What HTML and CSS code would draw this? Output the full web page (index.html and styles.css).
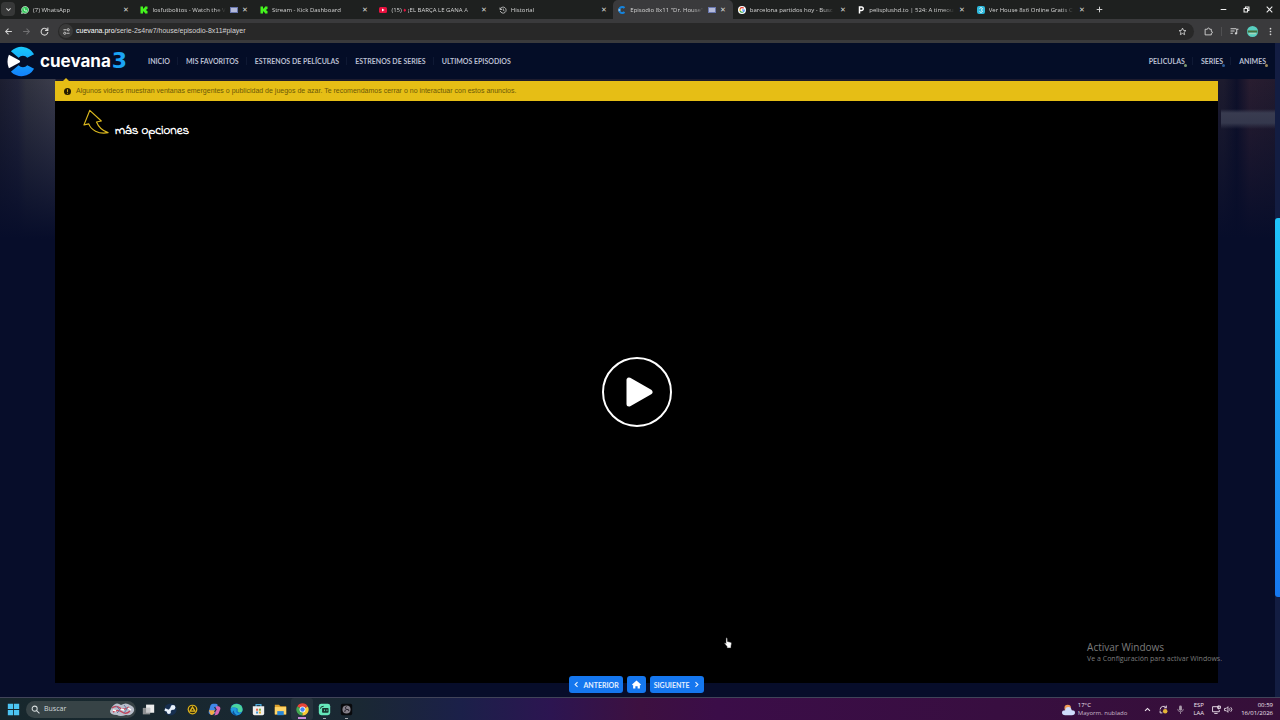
FILE: index.html
```
<!DOCTYPE html>
<html lang="es">
<head>
    <meta charset="UTF-8">
    <meta name="viewport" content="width=device-width, initial-scale=1.0">
    <title>Episodio 8x11 "Dr. House"</title>
    <link rel="stylesheet" href="styles.css">
</head>
<body>
    <div class="tab-strip">
        <button class="tab-search" aria-label="Buscar pestañas"><svg class="icon-sm" viewBox="0 0 10 10"><path d="M2 3.5l3 3 3-3" fill="none" stroke="currentColor" stroke-width="1.6"/></svg></button>
        <div class="tabs">
            <div class="tab">
                <svg class="favicon" viewBox="0 0 16 16"><path d="M1 15l1-4a7 7 0 1 1 3 3z" fill="#35c95b" stroke="#e8f8ec" stroke-width="1.3"/><path d="M5.500 4.500c-1 3 2 7 6 6.500l.5-1.500-2-1-1 1c-1-.5-2-1.500-2.200-2.500l.7-.7-.8-1.800z" fill="#fff"/></svg>
                <span class="tab-title">(7) WhatsApp</span>
                <button class="tab-close" aria-label="Cerrar"></button>
            </div>
            <div class="tab">
                <svg class="favicon" viewBox="0 0 16 16"><path d="M1 1h5v4h2V3h2V1h5v5h-2v2h-2 2v2h2v5h-5v-2H8v-2H6v4H1z" fill="#45f51e"/></svg>
                <span class="tab-title">losfutbolitos - Watch the V</span>
                <span class="tab-media"></span>
                <button class="tab-close" aria-label="Cerrar"></button>
            </div>
            <div class="tab">
                <svg class="favicon" viewBox="0 0 16 16"><path d="M1 1h5v4h2V3h2V1h5v5h-2v2h-2 2v2h2v5h-5v-2H8v-2H6v4H1z" fill="#45f51e"/></svg>
                <span class="tab-title">Stream - Kick Dashboard</span>
                <button class="tab-close" aria-label="Cerrar"></button>
            </div>
            <div class="tab">
                <svg class="favicon" viewBox="0 0 16 16"><rect y="2" width="16" height="12" rx="3" fill="#e8113f"/><path d="M6 5l5 3-5 3z" fill="#fff"/></svg>
                <span class="tab-title">(15) <span class="live">♦</span> ¡EL BARÇA LE GANA A</span>
                <button class="tab-close" aria-label="Cerrar"></button>
            </div>
            <div class="tab">
                <svg class="favicon" viewBox="0 0 16 16" fill="none" stroke="#c8c8c8" stroke-width="1.7"><path d="M2 3v4h4M2.500 6.500A6 6 0 1 1 2.500 10M8.500 5v3.500l2.500 1.500"/></svg>
                <span class="tab-title">Historial</span>
                <button class="tab-close" aria-label="Cerrar"></button>
            </div>
            <div class="tab active">
                <svg class="favicon" viewBox="0 0 16 16"><path d="M13 4a6 6 0 1 0 0 8" fill="none" stroke="#1583dc" stroke-width="4"/><path d="M1 5l5 3-5 3z" fill="#9bc6e8"/></svg>
                <span class="tab-title">Episodio 8x11 "Dr. House":</span>
                <span class="tab-media"></span>
                <button class="tab-close" aria-label="Cerrar"></button>
            </div>
            <div class="tab">
                <svg class="favicon" viewBox="0 0 16 16" fill="none" stroke-width="2.400"><circle cx="8" cy="8" r="8" fill="#fff"/><path d="M4 6a4.500 4.500 0 0 1 7.500-1.500" stroke="#e34133"/><path d="M4 6v4" stroke="#f5b400"/><path d="M4 10a4.500 4.500 0 0 0 6.500 1.800" stroke="#34a853"/><path d="M10.500 11.800A4.500 4.500 0 0 0 12.500 8H8" stroke="#4285f4"/></svg>
                <span class="tab-title">barcelona partidos hoy - Busc</span>
                <button class="tab-close" aria-label="Cerrar"></button>
            </div>
            <div class="tab">
                <svg class="favicon" viewBox="0 0 16 16"><path d="M5 15V2h4a3.500 3.500 0 0 1 0 7H5" fill="none" stroke="#fff" stroke-width="3"/></svg>
                <span class="tab-title">pelisplushd.to | 524: A timeou</span>
                <button class="tab-close" aria-label="Cerrar"></button>
            </div>
            <div class="tab">
                <svg class="favicon" viewBox="0 0 16 16"><rect width="16" height="16" rx="4" fill="#2fb9dc"/><path d="M5 5l3-2 3 2-2 3 2 3-3 2-3-2" fill="none" stroke="#e9fbff" stroke-width="2"/></svg>
                <span class="tab-title">Ver House 8x6 Online Gratis C</span>
                <button class="tab-close" aria-label="Cerrar"></button>
            </div>
        </div>
        <button class="new-tab" aria-label="Nueva pestaña"><svg class="icon-sm" viewBox="0 0 10 10"><path d="M5 1v8M1 5h8" stroke="currentColor" stroke-width="1.400"/></svg></button>
        <div class="window-controls">
            <button aria-label="Minimizar"><svg class="icon-sm" viewBox="0 0 10 10"><path d="M1 5h8" stroke="currentColor" stroke-width="1.500"/></svg></button>
            <button aria-label="Restaurar"><svg class="icon-sm" viewBox="0 0 10 10" fill="none" stroke="currentColor" stroke-width="1.500"><path d="M1.500 3.500h5v5h-5zM3.500 3V1.500h5v5H7"/></svg></button>
            <button aria-label="Cerrar ventana"><svg class="icon-sm" viewBox="0 0 10 10"><path d="M1 1l8 8M9 1L1 9" stroke="currentColor" stroke-width="1.500"/></svg></button>
        </div>
    </div>

    <div class="toolbar">
        <button aria-label="Atrás"><svg class="icon" viewBox="0 0 16 16"><path d="M14 8H3M8 3L3 8l5 5" fill="none" stroke="currentColor" stroke-width="1.800"/></svg></button>
        <button aria-label="Adelante" disabled><svg class="icon" viewBox="0 0 16 16"><path d="M2 8h11M8 3l5 5-5 5" fill="none" stroke="currentColor" stroke-width="1.800"/></svg></button>
        <button aria-label="Recargar"><svg class="icon" viewBox="0 0 16 16"><path d="M13 5a6 6 0 1 0 1 4M14 1v5H9" fill="none" stroke="currentColor" stroke-width="1.900"/></svg></button>
        <div class="address-bar">
            <button class="site-info" aria-label="Información del sitio"><svg class="icon-sm" viewBox="0 0 16 16" fill="none" stroke="currentColor" stroke-width="2"><path d="M1 4h7M8 12h7"/><circle cx="12" cy="4" r="2.500"/><circle cx="4" cy="12" r="2.500"/></svg></button>
            <a class="url" href="#player"><span>cuevana.pro</span>/serie-2s4rw7/house/episodio-8x11#player</a>
            <button aria-label="Favorito"><svg class="icon" viewBox="0 0 16 16"><path d="M8 2l1.800 4 4.300.4-3.300 2.900 1 4.300L8 11.400l-3.800 2.200 1-4.300L1.900 6.400 6.200 6z" fill="none" stroke="currentColor" stroke-width="1.500"/></svg></button>
        </div>
        <div class="toolbar-actions">
            <button aria-label="Extensiones"><svg class="icon" viewBox="0 0 16 16"><path d="M2 4h4c0-3 4-3 4 0h3v4c3 0 3 3 0 3v3H2z" fill="none" stroke="currentColor" stroke-width="1.600"/></svg></button>
            <span class="bar-line"></span>
            <button aria-label="Controles multimedia"><svg class="icon" viewBox="0 0 16 16"><path d="M1 3h10M1 7h7M1 11h4M12 12V4h3" fill="none" stroke="currentColor" stroke-width="1.800"/><circle cx="10.500" cy="11.500" r="2" fill="currentColor"/></svg></button>
            <button aria-label="Perfil"><svg class="avatar" viewBox="0 0 16 16"><circle cx="8" cy="8" r="8" fill="#58cfc0"/><path d="M1 8h14" stroke="#496d3c" stroke-width="3"/><path d="M3 11h10" stroke="#a5d6bd" stroke-width="2"/></svg></button>
            <button class="menu-btn" aria-label="Menú"><svg class="icon" viewBox="0 0 16 16" fill="currentColor"><circle cx="8" cy="3" r="1.500"/><circle cx="8" cy="8" r="1.500"/><circle cx="8" cy="13" r="1.500"/></svg></button>
        </div>
    </div>

    <div class="viewport">
        <div class="page">
            <header class="site-header">
                <a class="logo" href="#">
                    <svg class="logo-mark" viewBox="0 0 30 32"><defs><linearGradient id="c" x2="0" y2="1"><stop stop-color="#18c8fb"/><stop offset="1" stop-color="#1380fb"/></linearGradient></defs><path d="M28 8.500A15 15 0 0 0 4 5.500L12 12a6 6 0 0 1 9 0zM28 23.500A15 15 0 0 1 4 26.500L12 20a6 6 0 0 0 9 0z" fill="url(#c)"/><path d="M2 9q-3 7 0 14l11-6q1-1 0-2z" fill="#fff"/></svg>
                    <span class="logo-text">cuevana</span>
                    <span class="logo-num">3</span>
                </a>
                <nav class="main-nav">
                    <a href="#">INICIO</a>
                    <a href="#">MIS FAVORITOS</a>
                    <a href="#">ESTRENOS DE PELÍCULAS</a>
                    <a href="#">ESTRENOS DE SERIES</a>
                    <a href="#">ULTIMOS EPISODIOS</a>
                </nav>
                <nav class="genre-nav">
                    <a class="green" href="#">PELICULAS</a>
                    <a class="blue" href="#">SERIES</a>
                    <a class="orange" href="#">ANIMES</a>
                </nav>
            </header>

            <main class="content">
                <div class="notice">
                    <svg class="notice-icon" viewBox="0 0 16 16"><circle cx="8" cy="8" r="8" fill="#241c00"/><path d="M8 3v6M8 11v2" stroke="#e7be15" stroke-width="2"/></svg>
                    Algunos videos muestran ventanas emergentes o publicidad de juegos de azar. Te recomendamos cerrar o no interactuar con estos anuncios.
                </div>
                <div class="player" id="player">
                    <div class="more-options">
                        <svg class="hand-arrow" viewBox="0 0 28 26"><path d="M7 1L1 16l5-1c2 6 10 11 20 9-6-2-10-6-12-11l5-1z" fill="none" stroke="#dcb91e" stroke-width="1.200" stroke-linejoin="round"/></svg>
                        <span>más opciones</span>
                    </div>
                    <button class="play-btn" aria-label="Reproducir"><svg viewBox="0 0 70 70"><circle cx="35" cy="35" r="34" fill="none" stroke="#fff" stroke-width="2"/><path d="M27 23v24l21-12z" fill="#fff" stroke="#fff" stroke-width="5" stroke-linejoin="round"/></svg></button>
                </div>
                <div class="episode-nav">
                    <a class="btn" href="#"><svg class="icon-sm" viewBox="0 0 10 10"><path d="M6.500 1.500L3 5l3.500 3.500" fill="none" stroke="currentColor" stroke-width="1.600"/></svg> ANTERIOR</a>
                    <a class="btn btn-home" href="#" aria-label="Inicio"><svg class="icon" viewBox="0 0 16 16"><path d="M8 1L0 8l1 1.500 1-.8V15h4v-4h4v4h4V8.700l1 .8L16 8z" fill="#fff"/></svg></a>
                    <a class="btn" href="#">SIGUIENTE <svg class="icon-sm" viewBox="0 0 10 10"><path d="M3.500 1.500L7 5 3.500 8.500" fill="none" stroke="currentColor" stroke-width="1.600"/></svg></a>
                </div>
            </main>
        </div>
        <div class="scroll-track"><div class="scroll-thumb"></div></div>

        <div class="watermark">
            <p class="watermark-title">Activar Windows</p>
            <p>Ve a Configuración para activar Windows.</p>
        </div>
        <svg class="cursor" viewBox="0 0 16 22"><path d="M4 1q2-1 2.500 1L7 8l6 1.500q2.500.5 2 3L14 17v4H6v-3L1 12q0-2 2-1l1 1z" fill="#fff" stroke="#222"/></svg>
    </div>

    <footer class="taskbar">
        <button class="start" aria-label="Inicio"><svg viewBox="0 0 16 16" fill="#4cc5f2"><path d="M1 1h6.500v6.500H1zM8.500 1H15v6.500H8.500zM1 8.500h6.500V15H1zM8.500 8.500H15V15H8.500z"/></svg></button>
        <label class="search">
            <svg class="icon" viewBox="0 0 16 16" fill="none" stroke="#d5dbdc" stroke-width="1.800"><circle cx="6.500" cy="6.500" r="4.500"/><path d="M10 10l5 5"/></svg>
            <input type="search" placeholder="Buscar" aria-label="Buscar">
            <svg class="highlight" viewBox="0 0 26 13"><path d="M3 4q4-6 9-2 5-3 9 0 5 2 4 6-2 5-8 4-6 2-9 0-7 0-7-4z" fill="#b9bfcb"/><path d="M3 5q4-3 8 0t9-1M4 9q5-3 9 0t8-1" fill="none" stroke="#c0445a" stroke-width="1.500"/><path d="M7 3l4 4-3 3M15 2l3 4-3 4" fill="none" stroke="#6478a4" stroke-width="1"/><path d="M12 6l3 1M19 5l3 2M4 7l3 1" stroke="#fff" stroke-width="1.500"/></svg>
        </label>
        <div class="apps">
            <button aria-label="Vista de tareas"><svg viewBox="0 0 16 16"><path d="M5 2h10v10H5z" fill="#ececec"/><path d="M1 6h9v8H1z" fill="#8d9092"/><path d="M5 6h5v6H5z" fill="#c5c7c8"/></svg></button>
            <button aria-label="Steam"><svg viewBox="0 0 16 16"><circle cx="8" cy="8" r="7.500" fill="#172f50"/><path d="M1 8l5 2 4-4" fill="none" stroke="#e9f2fc" stroke-width="3"/><circle cx="11" cy="5.500" r="3" fill="#e9f2fc"/><circle cx="6" cy="11" r="2.500" fill="#e9f2fc"/></svg></button>
            <button aria-label="Limpiador"><svg viewBox="0 0 16 16"><circle cx="8" cy="8" r="6" fill="#e0b51c"/><circle cx="8" cy="8" r="4.500" fill="#302a10"/><path d="M8 5l3 5H5z" fill="none" stroke="#e0b51c" stroke-width="1.600"/></svg></button>
            <button aria-label="Copilot"><svg viewBox="0 0 16 16"><path d="M6 1h4q2 0 2 3L9 12q-1 2-3 2H3q-3-1-2-4l2-7q1-2 3-2z" fill="#3f87e8"/><path d="M10 4h3q3 1 2 4l-2 5q-1 2-4 2H7q2 0 2-4z" fill="#d765b2"/><path d="M1 9l2 5q3 2 5-2l1-3z" fill="#efad46"/><path d="M8 5l2 3-2 3" fill="none" stroke="#263248" stroke-width="1.500"/></svg></button>
            <button aria-label="Edge"><svg viewBox="0 0 16 16"><circle cx="8" cy="8" r="7.500" fill="#1976ce"/><path d="M1 6a7.500 7.500 0 0 1 14.500 3c-1 4-7 3-6 0S7 5 1 6z" fill="#4bd39d"/><path d="M1 7c4-3 8-1 7 2s2 5 6 3c-5 6-13 2-13-5z" fill="#219cdf"/><path d="M5 9q-1 4 4 6-6 1-6-4z" fill="#10529b"/></svg></button>
            <button aria-label="Microsoft Store"><svg viewBox="0 0 16 16"><path d="M5 5V2h6v3" fill="none" stroke="#4aa9dc" stroke-width="1.500"/><path d="M1 4h14v9q0 2-2 2H3q-2 0-2-2z" fill="#eeeeec"/><path d="M5 7h2.500v2.500H5z" fill="#e76345"/><path d="M8.500 7H11v2.500H8.500z" fill="#7bae37"/><path d="M5 10.500h2.500V13H5z" fill="#4098d3"/><path d="M8.500 10.500H11V13H8.500z" fill="#e7af28"/></svg></button>
            <button aria-label="Explorador de archivos"><svg viewBox="0 0 16 16"><path d="M1 2h5l2 2h7v10H1z" fill="#dda12c"/><path d="M1 5h14v9H1z" fill="#ffd568"/><path d="M4 10h8v5H4z" fill="#2886d6"/></svg></button>
            <button class="running current" aria-label="Chrome"><svg viewBox="0 0 16 16"><path d="M8 8L1.500 4.200a7.500 7.500 0 0 1 13 0z" fill="#e74336"/><path d="M8 8v7.500A7.500 7.500 0 0 1 1.500 4.200z" fill="#43a852"/><path d="M14.500 4.200A7.500 7.500 0 0 1 8 15.500V8z" fill="#f7cb35"/><circle cx="8" cy="8" r="3.600" fill="#fff"/><circle cx="8" cy="8" r="2.700" fill="#4285f4"/></svg></button>
            <button class="running" aria-label="Streamlabs"><svg viewBox="0 0 16 16"><rect x="1" y="1" width="14" height="14" rx="3" fill="#65e7ba"/><rect x="5" y="6" width="8" height="6" rx="1" fill="#17332e"/><path d="M3 7q0-3 4-3" fill="none" stroke="#17332e" stroke-width="1.200"/><path d="M8 8v2M11 8v2" stroke="#65e7ba"/></svg></button>
            <button class="running" aria-label="OBS"><svg viewBox="0 0 16 16"><rect x="1" y="1" width="14" height="14" rx="2" fill="#08090c"/><circle cx="8" cy="8" r="5" fill="#85808a"/><path d="M8 4q-3 2 0 4 3-1 3 2M8 8q-3 1-2 3" fill="none" stroke="#24202a" stroke-width="1.200"/></svg></button>
        </div>
        <button class="weather">
            <svg viewBox="0 0 16 16"><circle cx="7" cy="6" r="4" fill="#ef9a55"/><path d="M4 15q-4 0-4-3t4-3q0-4 4-4 3 0 4 4 4 0 4 3t-4 3z" fill="#cfdcfb"/></svg>
            <span>17°C<br><em>Mayorm. nublado</em></span>
        </button>
        <div class="tray">
            <button aria-label="Iconos ocultos"><svg class="icon-sm" viewBox="0 0 10 10"><path d="M1.500 7L5 3.500 8.500 7" fill="none" stroke="currentColor" stroke-width="1.600"/></svg></button>
            <button aria-label="Actualización"><svg class="icon" viewBox="0 0 16 16"><path d="M2 8a6 6 0 0 1 11-3M13 1v4H9M2 10v4h4" fill="none" stroke="currentColor" stroke-width="1.600"/><circle cx="11" cy="11" r="4" fill="#e6b537"/></svg></button>
            <button aria-label="Micrófono"><svg class="icon" viewBox="0 0 16 16"><rect x="5.500" y="1" width="5" height="9" rx="2.500" fill="#ab9cac"/><path d="M3 7q0 5 5 5t5-5M8 12v4" fill="none" stroke="#ab9cac" stroke-width="1.300"/></svg></button>
            <button class="language">ESP<br>LAA</button>
            <button class="net" aria-label="Red y volumen">
                <svg class="icon" viewBox="0 0 16 16" fill="none" stroke="currentColor" stroke-width="1.600"><path d="M10 3H1v9h12V9M4 15h6M12 1v7M10 2h5v4h-5z"/></svg>
                <svg class="icon" viewBox="0 0 16 16" fill="none" stroke="currentColor" stroke-width="1.500"><path d="M1 6h3l3-3v10l-3-3H1zM9.500 6q2 2 0 4M12 4q4 4 0 8"/></svg>
            </button>
            <button class="clock">00:59<br>16/01/2026</button>
        </div>
    </footer>
</body>
</html>
```
FILE: styles.css
```
* {
    box-sizing: border-box;
}
body {
    font-family: "Open Sans", "Segoe UI", sans-serif;
    font-size: 7px;
    line-height: 8px;
    color: #d4d4d4;
    background-color: #050b24;
    margin: 0;
    display: flex;
    flex-direction: column;
    height: 100vh;
    overflow: hidden;
}
button {
    display: flex;
    align-items: center;
    justify-content: center;
    flex: none;
    background: none;
    border: none;
    padding: 0;
    font: inherit;
    color: inherit;
}
a {
    color: inherit;
    text-decoration: none;
}
p {
    margin: 0;
}
svg {
    display: block;
    flex: none;
}
.icon {
    width: 9px;
    height: 9px;
}
.icon-sm {
    width: 7px;
    height: 7px;
}

/* Browser */
.tab-strip {
    display: flex;
    align-items: stretch;
    flex: none;
    height: 19px;
    background-color: #1e201f;
}
.tab-search {
    width: 14px;
    height: 14px;
    margin: 2px 1px;
    border-radius: 4px;
    background-color: #373838;
}
.tabs {
    display: grid;
    grid-template-columns: repeat(9, 1fr);
    width: 84%;
}
.tab {
    display: flex;
    align-items: center;
    gap: 4px;
    min-width: 0;
    padding: 0 6px 0 5px;
    border-radius: 5px 5px 0 0;
}
.tab.active {
    background-color: #3a3a3c;
}
.favicon {
    width: 8px;
    height: 8px;
}
.tab-title {
    flex: 1;
    overflow: hidden;
    white-space: nowrap;
    font-size: 6px;
    mask-image: linear-gradient(90deg, #000 85%, transparent);
}
.live {
    color: #e8113f;
}
.tab-media {
    width: 8px;
    height: 6px;
    border: 1px solid #6876ae;
    background-color: #b4bad9;
}
.tab-close {
    width: 7px;
    height: 8px;
}
.tab-close::before {
    content: "✕";
    font-size: 7px;
}
.new-tab {
    width: 16px;
}
.window-controls {
    display: flex;
    gap: 16px;
    margin-left: auto;
    padding-right: 7px;
    color: #f0f0f0;
}
.toolbar {
    display: flex;
    align-items: center;
    flex: none;
    gap: 9px;
    height: 24px;
    padding: 0 5px 0 4px;
    background-color: #3a3a3c;
}
.toolbar button:disabled {
    color: #717173;
}
.address-bar {
    display: flex;
    align-items: center;
    flex: 1;
    gap: 3px;
    height: 17px;
    padding: 0 7px 0 1px;
    border-radius: 9px;
    background-color: #282828;
    font-family: "Liberation Sans", Arial, sans-serif;
}
.site-info {
    width: 14px;
    height: 14px;
    border-radius: 50%;
    background-color: #3a3a3a;
}
.url {
    flex: 1;
}
.url span {
    color: #fff;
}
.toolbar-actions {
    display: flex;
    align-items: center;
    gap: 8px;
    margin-left: 1px;
}
.bar-line {
    width: 1px;
    height: 9px;
    background-color: #505052;
}
.avatar {
    width: 11px;
    height: 11px;
}

/* Site */
.viewport {
    display: flex;
    flex: 1;
    min-height: 0;
    position: relative;
}
.page {
    display: flex;
    flex-direction: column;
    flex: 1;
    background: #050c27;
}
.site-header {
    display: flex;
    align-items: center;
    flex: none;
    height: 36px;
    padding: 0 9px 0 7px;
    background-color: #040d27;
    color: #b9bfd0;
    font-family: Lato, sans-serif;
    font-weight: 700;
}
.logo {
    display: flex;
    align-items: center;
    margin-right: 21px;
    color: #fff;
    font-family: Inter, sans-serif;
    font-size: 17px;
    line-height: 20px;
}
.logo-mark {
    width: 29px;
    height: 31px;
    margin-right: 4px;
}
.logo-num {
    margin-left: 1px;
    color: #1ba4f5;
    font-family: "DejaVu Sans", sans-serif;
    font-size: 22px;
}
.main-nav,
.genre-nav {
    display: flex;
}
.genre-nav {
    margin-left: auto;
}
.site-header nav a {
    position: relative;
}
.site-header nav a + a {
    margin-left: 7px;
    padding-left: 8px;
    border-left: 1px solid #0f1934;
}
.genre-nav a::after {
    content: "";
    position: absolute;
    right: -2px;
    bottom: -2px;
    width: 3px;
    height: 3px;
    border-radius: 50%;
}
.green::after {
    background-color: #7c9a72;
}
.blue::after {
    background-color: #2c5c98;
}
.orange::after {
    background-color: #a08a5a;
}
.content {
    display: flex;
    flex-direction: column;
    flex: 1;
    padding: 2px 57px 4px 55px;
    background:
        linear-gradient(180deg, transparent, #070d2a 160px),
        linear-gradient(180deg, transparent 30px, #46485a 34px, #46485a 44px, transparent 50px) right top / 54px 160px no-repeat,
        linear-gradient(90deg, #1c1e30, #23253a 18px, #30323f 26px, #3c3d4c 55px, #1d1c2e 56px, #1d1b2e 96%, #0e1029 97%, #291d30 98%, #231b2e);
}
.notice {
    display: flex;
    align-items: center;
    flex: none;
    gap: 5px;
    height: 20px;
    padding: 0 9px;
    position: relative;
    background-color: #e6be15;
    color: #6b5808;
    font-family: "Liberation Sans", Arial, sans-serif;
}
.notice::before {
    content: "";
    position: absolute;
    left: 8px;
    top: -3px;
    border: 3px solid transparent;
    border-top: none;
    border-bottom-color: #e6be15;
}
.notice-icon {
    width: 7px;
    height: 7px;
}
.player {
    display: flex;
    align-items: center;
    justify-content: center;
    flex: 1;
    position: relative;
    background-color: #000;
}
.more-options {
    display: flex;
    align-items: flex-end;
    gap: 5px;
    position: absolute;
    left: 28px;
    top: 8px;
    color: #fff;
    font-family: "Indie Flower", "Comic Neue", cursive;
    font-size: 13px;
    font-weight: 700;
    line-height: 9px;
}
.hand-arrow {
    width: 27px;
    height: 26px;
}
.play-btn,
.play-btn svg {
    width: 70px;
    height: 70px;
}
.episode-nav {
    display: flex;
    justify-content: center;
    gap: 4px;
    margin-top: -7px;
    position: relative;
}
.btn {
    display: flex;
    align-items: center;
    gap: 3px;
    height: 17px;
    padding: 0 4px;
    border-radius: 3px;
    background-color: #1577ef;
    color: #e4efff;
    font-family: Lato, sans-serif;
    font-weight: 700;
}
.btn-home {
    padding: 0 5px;
}
.scroll-track {
    display: flex;
    flex-direction: column;
    width: 5px;
    background-color: #131d42;
}
.scroll-track::before {
    content: "";
    flex: 175;
}
.scroll-track::after {
    content: "";
    flex: 100;
}
.scroll-thumb {
    flex: 379;
    border-radius: 3px 0 0 3px;
    background: linear-gradient(#1fc4fa, #1677f0);
}
.watermark {
    position: absolute;
    right: 58px;
    bottom: 33px;
    color: #7c7c7c;
    line-height: 10px;
}
.watermark-title {
    font-size: 10px;
    line-height: 14px;
}
.cursor {
    position: absolute;
    left: 724px;
    top: 594px;
    width: 8px;
    height: 12px;
}

/* Taskbar */
.taskbar {
    display: flex;
    align-items: center;
    flex: none;
    height: 23px;
    padding: 0 7px;
    border-top: 1px solid #414459;
    background: linear-gradient(90deg, #17272c, #1a2833 28%, #1b2049 36%, #2c1551 43%, #3d1040 50%, #3b0d48 56%, #350f38 100%);
    color: #f0e6f0;
}
.start svg {
    width: 13px;
    height: 13px;
}
.search {
    display: flex;
    align-items: center;
    gap: 4px;
    width: 110px;
    height: 17px;
    margin-left: 6px;
    padding: 0 1px 0 5px;
    border-radius: 9px;
    background-color: #374346;
}
.search input {
    flex: 1;
    min-width: 0;
    padding: 0;
    border: none;
    outline: none;
    background: none;
    color: #dde2e3;
    font: inherit;
}
.search input::placeholder {
    color: #d5dbdc;
}
.highlight {
    width: 26px;
    height: 13px;
}
.apps {
    display: flex;
    margin-left: 1px;
}
.apps button {
    width: 22px;
    height: 22px;
    position: relative;
}
.apps svg {
    width: 13px;
    height: 13px;
}
.apps .running::after {
    content: "";
    position: absolute;
    bottom: 1px;
    width: 3px;
    height: 1px;
    background-color: #a4a6ac;
}
.apps .current {
    border-radius: 3px;
    background-color: #26333d;
}
.apps .current::after {
    width: 8px;
    height: 2px;
    background-color: #c98bd8;
}
.weather {
    gap: 3px;
    margin-left: auto;
    font-size: 6px;
    text-align: left;
}
.weather svg {
    width: 13px;
    height: 13px;
}
.weather em {
    color: #c8b8c9;
    font-style: normal;
}
.tray {
    display: flex;
    align-items: center;
    gap: 8px;
    margin-left: 17px;
    font-size: 6px;
}
.net {
    gap: 3px;
}
.clock {
    text-align: right;
}
```
